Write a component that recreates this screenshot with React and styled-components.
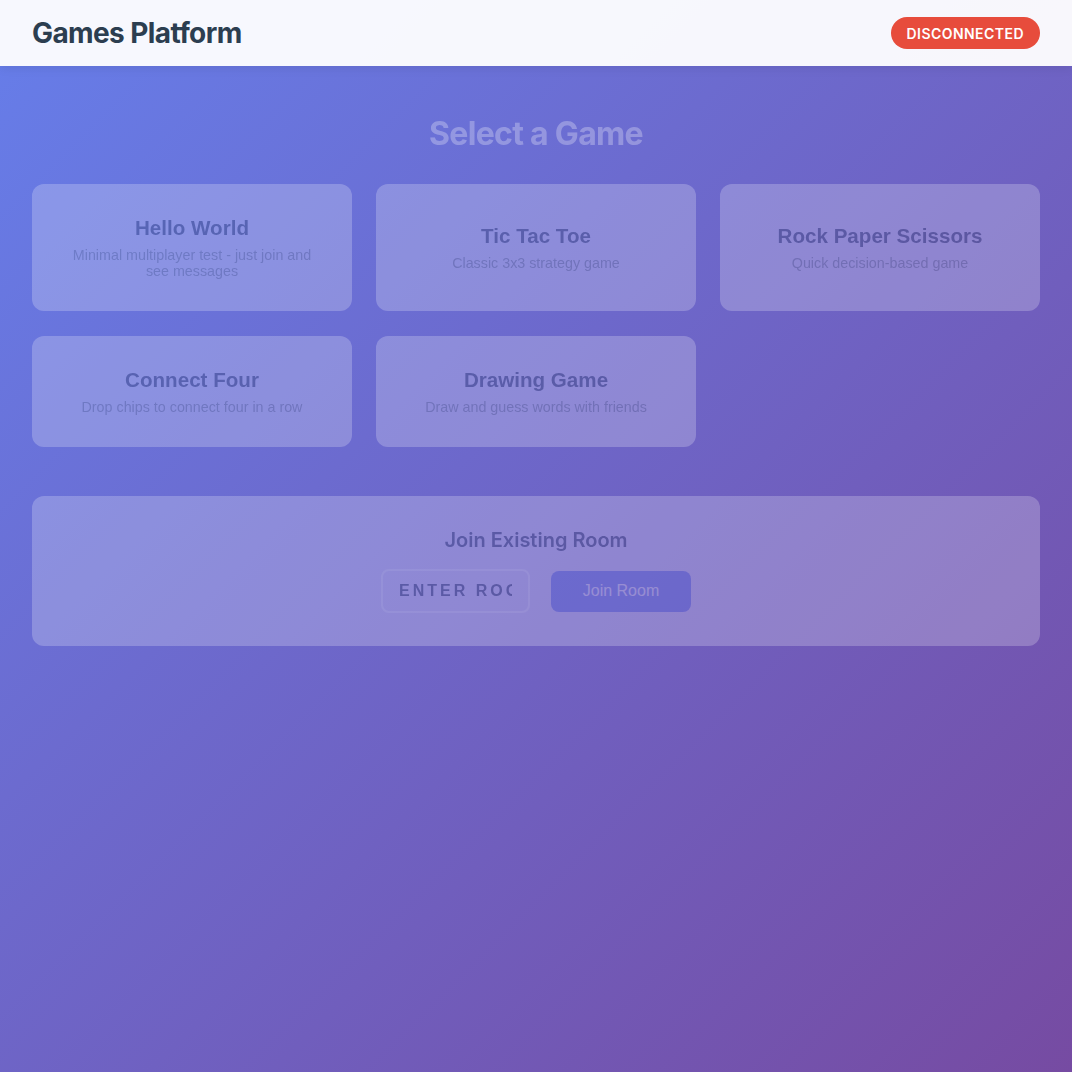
import React from "react";
import styled, { createGlobalStyle } from "styled-components";

const GlobalStyle = createGlobalStyle`
  html, body { margin: 0; padding: 0; }
  body {
    min-height: 100vh;
    font-family: Inter, "Noto Sans", sans-serif;
    background: linear-gradient(135deg, #667eea 0%, #764ba2 100%);
    background-attachment: fixed;
  }
  * { box-sizing: border-box; }
`;

const Page = styled.div`
  min-height: 100vh;
  display: flex;
  flex-direction: column;
`;

const Header = styled.header`
  height: 66px;
  display: flex;
  align-items: center;
  justify-content: space-between;
  padding: 0 32px;
  background: rgba(255, 255, 255, 0.95);
  box-shadow: 0 2px 10px rgba(0, 0, 0, 0.08);
`;

const Brand = styled.h1`
  margin: 0;
  font-family: Inter, sans-serif;
  font-size: 28px;
  font-weight: 700;
  color: #2c3e50;
  letter-spacing: -0.6px;
`;

const StatusBadge = styled.span`
  display: inline-flex;
  align-items: center;
  height: 32px;
  padding: 0 16px;
  border-radius: 16px;
  background: ${(p) => (p.$connected ? "#27ae60" : "#e74c3c")};
  color: #fff;
  font-family: Inter, sans-serif;
  font-size: 14px;
  font-weight: 600;
  letter-spacing: 0.45px;
  text-transform: uppercase;
`;

const Main = styled.main`
  padding: 32px;
  opacity: ${(p) => (p.$disabled ? 0.28 : 1)};
`;

const SectionTitle = styled.h2`
  margin: 17px 0 31px;
  text-align: center;
  font-family: Inter, sans-serif;
  font-size: 32px;
  font-weight: 700;
  line-height: 38px;
  letter-spacing: -0.7px;
  color: #fff;
`;

const GameGrid = styled.div`
  display: grid;
  grid-template-columns: repeat(3, 1fr);
  gap: 25px 24px;
`;

const GameCard = styled.div`
  display: flex;
  flex-direction: column;
  justify-content: center;
  align-items: center;
  text-align: center;
  padding: 32px;
  background: rgba(255, 255, 255, 0.82);
  border-radius: 12px;
  cursor: pointer;
`;

const GameName = styled.h3`
  margin: 0 0 8px;
  font-family: "Liberation Sans", Arial, sans-serif;
  font-size: 20.6px;
  font-weight: 700;
  line-height: 23px;
  color: #2c3e50;
`;

const GameDesc = styled.p`
  margin: 0;
  font-family: "Liberation Sans", Arial, sans-serif;
  font-size: 14.3px;
  line-height: 16px;
  color: #7f8c8d;
`;

const JoinPanel = styled.section`
  margin-top: 49px;
  padding: 32px 32px 33px;
  background: rgba(255, 255, 255, 0.82);
  border-radius: 12px;
  text-align: center;
`;

const JoinTitle = styled.h3`
  margin: 0 0 16px;
  font-family: Inter, sans-serif;
  font-size: 20px;
  font-weight: 600;
  line-height: 25px;
  color: #2c3e50;
`;

const JoinRow = styled.div`
  display: flex;
  justify-content: center;
  align-items: center;
  gap: 21px;
`;

const RoomInput = styled.input`
  width: 149px;
  height: 44px;
  padding: 0 16px;
  border: 2px solid #ffffff;
  border-radius: 8px;
  background: transparent;
  font-family: "Liberation Sans", Arial, sans-serif;
  font-size: 16px;
  font-weight: 700;
  letter-spacing: 3px;
  text-transform: uppercase;
  color: #2c3e50;
  outline: none;
  &::placeholder {
    color: #2c3e50;
    opacity: 1;
  }
`;

const JoinButton = styled.button`
  width: 140px;
  height: 41px;
  border: none;
  border-radius: 8px;
  background: #667eea;
  color: #fff;
  font-family: "Liberation Sans", Arial, sans-serif;
  font-size: 16px;
  cursor: pointer;
`;

const games = [
  { id: "hello", name: "Hello World", desc: "Minimal multiplayer test - just join and see messages" },
  { id: "ttt", name: "Tic Tac Toe", desc: "Classic 3x3 strategy game" },
  { id: "rps", name: "Rock Paper Scissors", desc: "Quick decision-based game" },
  { id: "c4", name: "Connect Four", desc: "Drop chips to connect four in a row" },
  { id: "draw", name: "Drawing Game", desc: "Draw and guess words with friends" },
];

export default function App() {
  const connected = false;
  return (
    <Page>
      <GlobalStyle />
      <Header>
        <Brand>Games Platform</Brand>
        <StatusBadge $connected={connected}>{connected ? "Connected" : "Disconnected"}</StatusBadge>
      </Header>
      <Main $disabled={!connected}>
        <SectionTitle>Select a Game</SectionTitle>
        <GameGrid>
          {games.map((g) => (
            <GameCard key={g.id}>
              <GameName>{g.name}</GameName>
              <GameDesc>{g.desc}</GameDesc>
            </GameCard>
          ))}
        </GameGrid>
        <JoinPanel>
          <JoinTitle>Join Existing Room</JoinTitle>
          <JoinRow>
            <RoomInput placeholder="Enter room code" />
            <JoinButton disabled>Join Room</JoinButton>
          </JoinRow>
        </JoinPanel>
      </Main>
    </Page>
  );
}
